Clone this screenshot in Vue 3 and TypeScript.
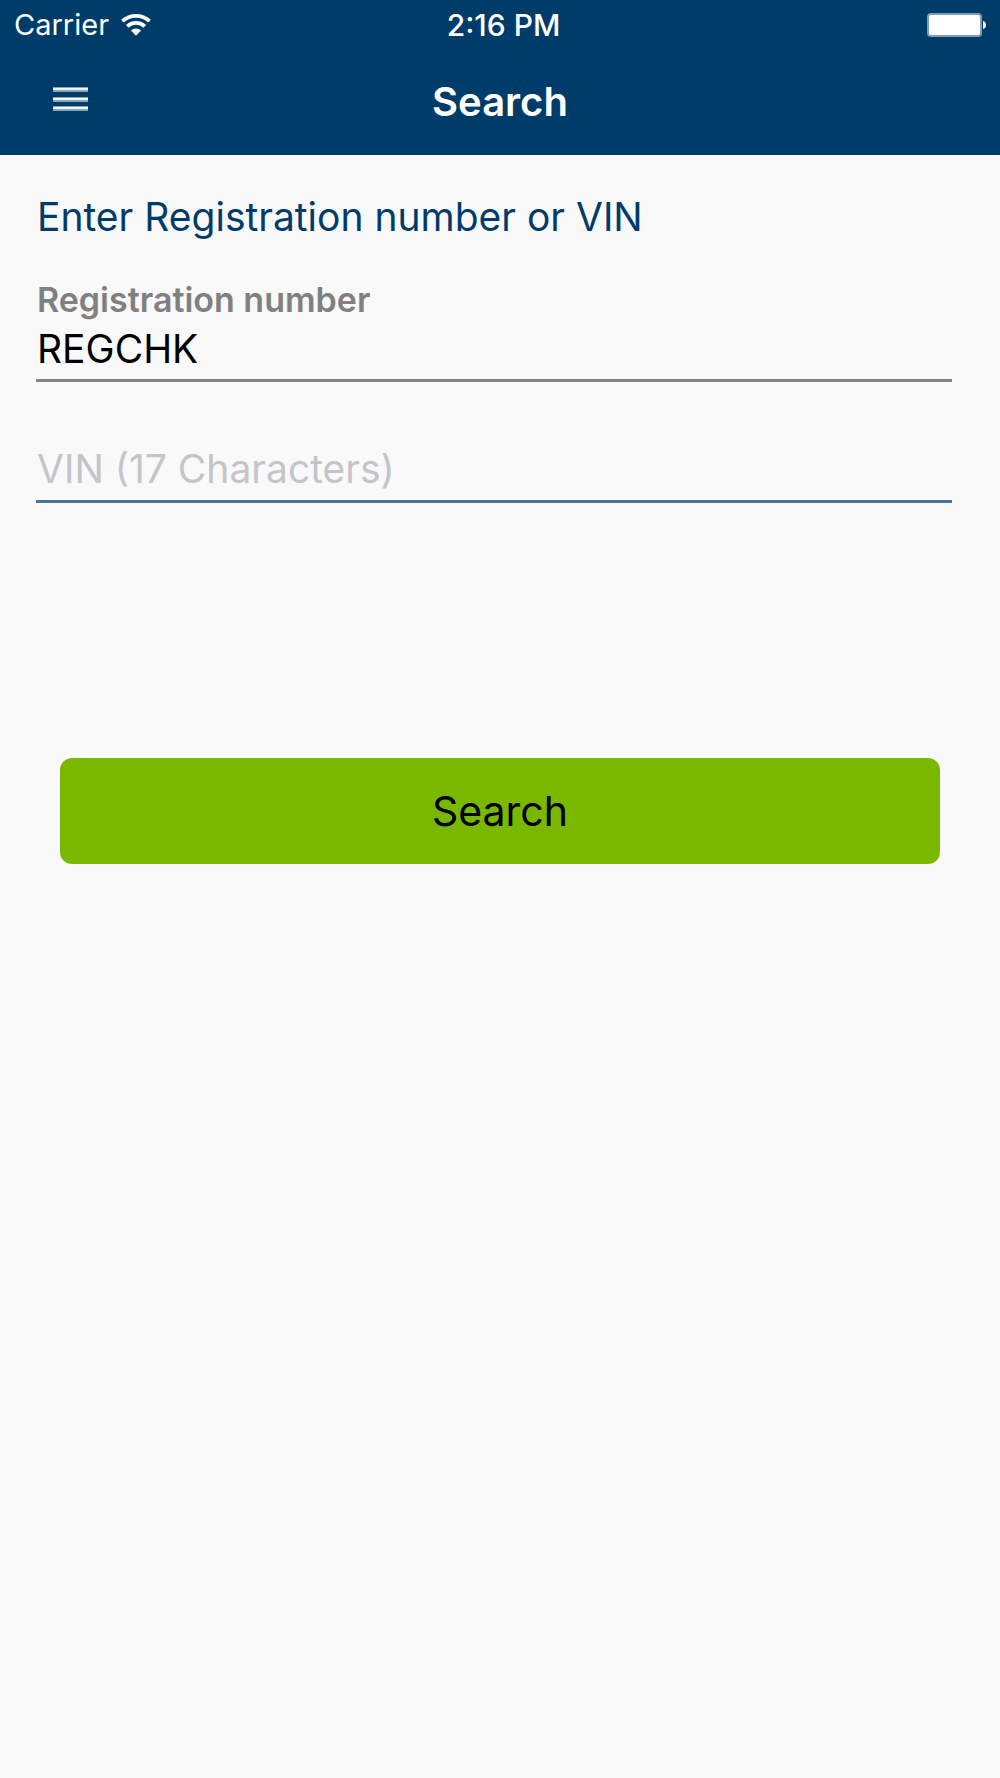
<script setup lang="ts">
import { ref } from 'vue'

const registration = ref<string>('REGCHK')
const vin = ref<string>('')
</script>

<template>
  <div class="screen">
    <header class="header">
      <div class="status">
        <div class="carrier">
          <span>Carrier</span>
          <svg class="wifi" viewBox="0 0 30 22" aria-hidden="true">
            <g fill="none" stroke="#fff" stroke-width="3.7">
              <path d="M1.400 7.200C9 .2 21 .2 28.600 7.200" />
              <path d="M6.200 12.300C11 7.700 19 7.700 23.800 12.300" />
            </g>
            <path d="M15 21.800L9.900 16.600C12.600 13.900 17.400 13.900 20.100 16.600Z" fill="#fff" />
          </svg>
        </div>
        <span class="time">2:16 PM</span>
        <svg class="battery" viewBox="0 0 60 24" aria-label="Battery full">
          <rect x="1" y="1" width="53" height="22" rx="3" fill="#fff" stroke="#7f9db4" stroke-width="2" />
          <path d="M56 8C60 8.500 60 15.500 56 16Z" fill="#fff" />
        </svg>
      </div>
      <div class="nav">
        <button class="menu" type="button" aria-label="Menu">
          <svg viewBox="0 0 36 26" aria-hidden="true">
            <g fill="#8ba5b8">
              <rect x="0" y="1" width="35" height="5" />
              <rect x="0" y="11" width="35" height="5" />
              <rect x="0" y="20" width="35" height="5" />
            </g>
            <g fill="#f2f6f8">
              <rect x="0" y="2" width="35" height="2" />
              <rect x="0" y="12" width="35" height="2" />
              <rect x="0" y="21" width="35" height="2" />
            </g>
          </svg>
        </button>
        <h1>Search</h1>
      </div>
    </header>

    <form class="form" @submit.prevent>
      <h2>Enter Registration number or VIN</h2>
      <div class="field">
        <label for="registration">Registration number</label>
        <input id="registration" v-model="registration" type="text" />
      </div>
      <div class="field active">
        <input id="vin" v-model="vin" type="text" maxlength="17" placeholder="VIN (17 Characters)" aria-label="VIN (17 Characters)" />
      </div>
      <button class="submit" type="submit">Search</button>
    </form>
  </div>
</template>

<style>
body {
  background: #f9f9f9;
}
</style>

<style scoped>
.screen {
  min-height: 100vh;
  background: #f9f9f9;
  color: #000;
  font-family: Inter, "Liberation Sans", sans-serif;
}

.header {
  background: #003c69;
  color: #fff;
}

.status {
  display: grid;
  grid-template-columns: 1fr auto 1fr;
  align-items: center;
  height: 50px;
  padding: 0 13px 0 14px;
  font-size: 29px;
  line-height: 36px;
}

.carrier {
  display: flex;
  align-items: center;
  gap: 12px;
}

.wifi {
  width: 30px;
  height: 22px;
}

.time {
  padding-left: 6px;
  font-size: 30px;
  font-weight: 500;
}

.battery {
  justify-self: end;
  width: 60px;
  height: 24px;
}

.nav {
  display: grid;
  grid-template-columns: 1fr auto 1fr;
  align-items: center;
  height: 103px;
  padding: 0 53px 2px;
}

.menu {
  justify-self: start;
  padding: 0 0 6px;
  border: 0;
  background: none;
}

.menu svg {
  display: block;
  width: 36px;
  height: 26px;
}

h1 {
  margin: 0;
  font-size: 40px;
  font-weight: 600;
  line-height: 48px;
}

.form {
  padding: 38px 48px 0 36px;
}

h2 {
  margin: 0 0 35px;
  padding-left: 1px;
  color: #003c69;
  font-size: 39px;
  font-weight: 400;
  line-height: 48px;
}

.field {
  border-bottom: 3px solid #858585;
}

.field.active {
  margin-top: 60px;
  border-color: #4c719b;
}

label {
  display: block;
  padding-left: 1px;
  color: #808080;
  font-size: 34px;
  font-weight: 600;
  line-height: 48px;
}

input {
  display: block;
  box-sizing: border-box;
  width: 100%;
  height: 55px;
  padding: 0 0 6px 1px;
  border: 0;
  outline: 0;
  background: none;
  color: #000;
  font: 400 39px/48px Inter, "Liberation Sans", sans-serif;
}

.active input {
  height: 58px;
}

input::placeholder {
  color: #c4c4ca;
  opacity: 1;
}

.submit {
  display: block;
  width: calc(100% - 36px);
  height: 106px;
  margin: 255px 12px 0 24px;
  padding: 0;
  border: 0;
  border-radius: 12px;
  background: #7ab800;
  color: #000;
  font: 400 41px/50px Inter, "Liberation Sans", sans-serif;
}
</style>
